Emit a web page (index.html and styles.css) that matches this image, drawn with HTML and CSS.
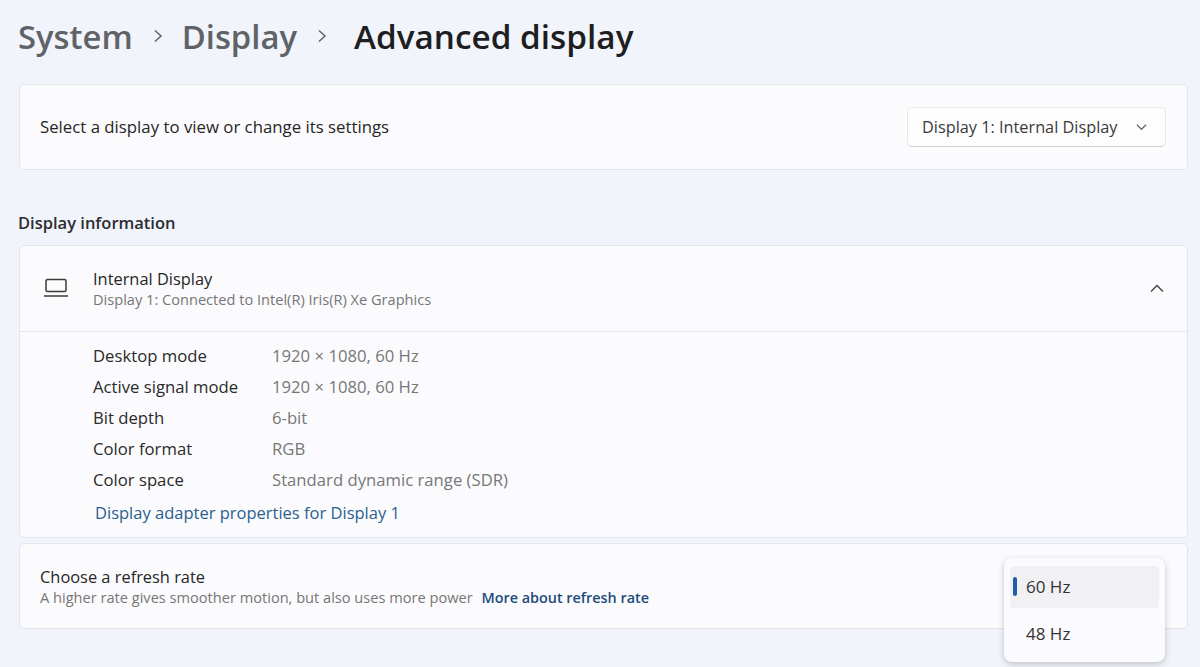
FILE: index.html
```html
<!DOCTYPE html>
<html lang="en">
<head>
<meta charset="utf-8">
<title>Advanced display</title>
<link rel="stylesheet" href="styles.css">
</head>
<body>
<main class="page">
  <h1 class="crumbs">
    <span class="crumb">System</span>
    <svg class="sep" viewBox="0 0 10 14"><path d="M2 1.5 8 7 2 12.5"/></svg>
    <span class="crumb">Display</span>
    <svg class="sep" viewBox="0 0 10 14"><path d="M2 1.5 8 7 2 12.5"/></svg>
    <span class="crumb current">Advanced display</span>
  </h1>

  <section class="card select-card">
    <span class="label select-label">Select a display to view or change its settings</span>
    <div class="combo">
      <span>Display 1: Internal Display</span>
      <svg class="combo-chev" viewBox="0 0 12 8"><path d="M1 1.5 6 6.5 11 1.5"/></svg>
    </div>
  </section>

  <h2 class="section-title">Display information</h2>

  <section class="card info-card">
    <header class="info-head">
      <svg class="laptop" viewBox="0 0 26 20"><path d="M4.5 1.5h17a1.5 1.5 0 0 1 1.5 1.5v9a1.5 1.5 0 0 1-1.5 1.5h-17A1.500 1.500 0 0 1 3 12V3a1.500 1.500 0 0 1 1.500-1.500Z"/><path d="M1 18h24"/></svg>
      <div class="info-titles">
        <div class="label">Internal Display</div>
        <div class="sub">Display 1: Connected to Intel(R) Iris(R) Xe Graphics</div>
      </div>
      <svg class="up-chev" viewBox="0 0 14 9"><path d="M1 7.500 7 1.500 13 7.500"/></svg>
    </header>
    <div class="info-body">
      <dl class="specs">
        <dt>Desktop mode</dt><dd>1920 × 1080, 60 Hz</dd>
        <dt>Active signal mode</dt><dd>1920 × 1080, 60 Hz</dd>
        <dt>Bit depth</dt><dd>6-bit</dd>
        <dt>Color format</dt><dd>RGB</dd>
        <dt>Color space</dt><dd>Standard dynamic range (SDR)</dd>
      </dl>
      <a class="adapter-link" href="#">Display adapter properties for Display 1</a>
    </div>
  </section>

  <section class="card refresh-card">
    <div class="label">Choose a refresh rate</div>
    <div class="sub">A higher rate gives smoother motion, but also uses more power <a class="more-link" href="#">More about refresh rate</a></div>
  </section>
</main>

<div class="menu">
  <div class="menu-item selected"><span class="marker"></span>60 Hz</div>
  <div class="menu-item">48 Hz</div>
</div>
</body>
</html>
```

FILE: styles.css
```css
* { box-sizing: border-box; }
html, body { margin: 0; height: 100%; }
body {
  background: #f1f4fb;
  color: #1c1c1c;
  font-family: "Open Sans", "Noto Sans", sans-serif;
  overflow: hidden;
  position: relative;
}
.page { padding: 0 12px 0 19px; }
.crumbs {
  margin: 0 0 0 -1px;
  height: 84px;
  padding: 14px 0 0;
  display: flex;
  align-items: flex-start;
  font-size: 32.8px;
  line-height: 45px;
  font-weight: 600;
  color: #5f6368;
}
.crumb.current { margin-left: 8px; font-size: 33.3px; color: #1e1e22; }
.sep {
  width: 10px;
  height: 14px;
  margin: 15px 19px 0 20px;
  fill: none;
  stroke: #5f6368;
  stroke-width: 1.500;
}
.card {
  background: #fbfbfd;
  border: 1px solid #e4e6ec;
  border-radius: 5px;
}
.label { font-size: 16.4px; line-height: 22px; color: #262626; }
.select-label { font-size: 16.800px; }
.sub { font-size: 14.600px; line-height: 18px; color: #767676; }
.select-card {
  height: 86px;
  padding: 0 21px 0 20px;
  display: flex;
  align-items: center;
  justify-content: space-between;
}
.combo {
  width: 259px;
  height: 40px;
  padding: 0 15px 0 14px;
  display: flex;
  align-items: center;
  justify-content: space-between;
  background: #fdfdfe;
  border: 1px solid #e8e8ea;
  border-bottom-color: #cfcfd2;
  border-radius: 5px;
  font-size: 16.300px;
  color: #3a3a3a;
}
.combo-chev { width: 11px; height: 8px; margin-right: 3px; fill: none; stroke: #666; stroke-width: 1.300; }
.section-title {
  margin: 0 0 0 -1px;
  padding-top: 41px;
  height: 75px;
  font-size: 16.500px;
  line-height: 24px;
  font-weight: 600;
  color: #2c2c30;
}
.info-card { height: 293px; }
.info-head {
  height: 86px;
  padding: 0 23px;
  display: flex;
  align-items: center;
  border-bottom: 1px solid #e4e6ec;
}
.laptop { width: 26px; height: 20px; margin-top: -1px; fill: none; stroke: #3b3b3b; stroke-width: 1.500; }
.info-titles { flex: 1; margin: -2px 0 0 24px; }
.up-chev { width: 14px; height: 9px; fill: none; stroke: #444; stroke-width: 1.400; }
.info-body { padding: 8px 0 0 73px; }
.specs {
  margin: 0;
  display: grid;
  grid-template-columns: 179px 1fr;
  grid-auto-rows: 31px;
  align-items: center;
  font-size: 16.700px;
}
.specs dt { color: #2a2a2a; }
.specs dd { margin: 0; color: #777; }
.adapter-link {
  display: block;
  margin: 7px 0 0 2px;
  font-size: 16.500px;
  line-height: 22px;
  color: #2a5f8f;
  text-decoration: none;
}
.refresh-card {
  margin-top: 5px;
  height: 86px;
  padding: 22px 20px 0;
}
.more-link { margin-left: 5px; font-size: 14.400px; font-weight: 600; color: #1d4a7c; text-decoration: none; }
.menu {
  position: absolute;
  left: 1004px;
  top: 558px;
  width: 161px;
  height: 104px;
  padding: 8px 6px;
  background: #fbfbfd;
  border-radius: 8px;
  box-shadow: 0 2px 6px rgba(0, 0, 0, 0.22);
}
.menu-item {
  position: relative;
  height: 42px;
  margin-bottom: 5px;
  padding: 0 0 2px 16px;
  display: flex;
  align-items: center;
  font-size: 17px;
  color: #333;
  border-radius: 4px;
}
.menu-item.selected { background: #f1f1f3; }
.marker {
  position: absolute;
  left: 3px;
  top: 11px;
  width: 4px;
  height: 19px;
  border-radius: 2px;
  background: #1c5fb0;
}
```
